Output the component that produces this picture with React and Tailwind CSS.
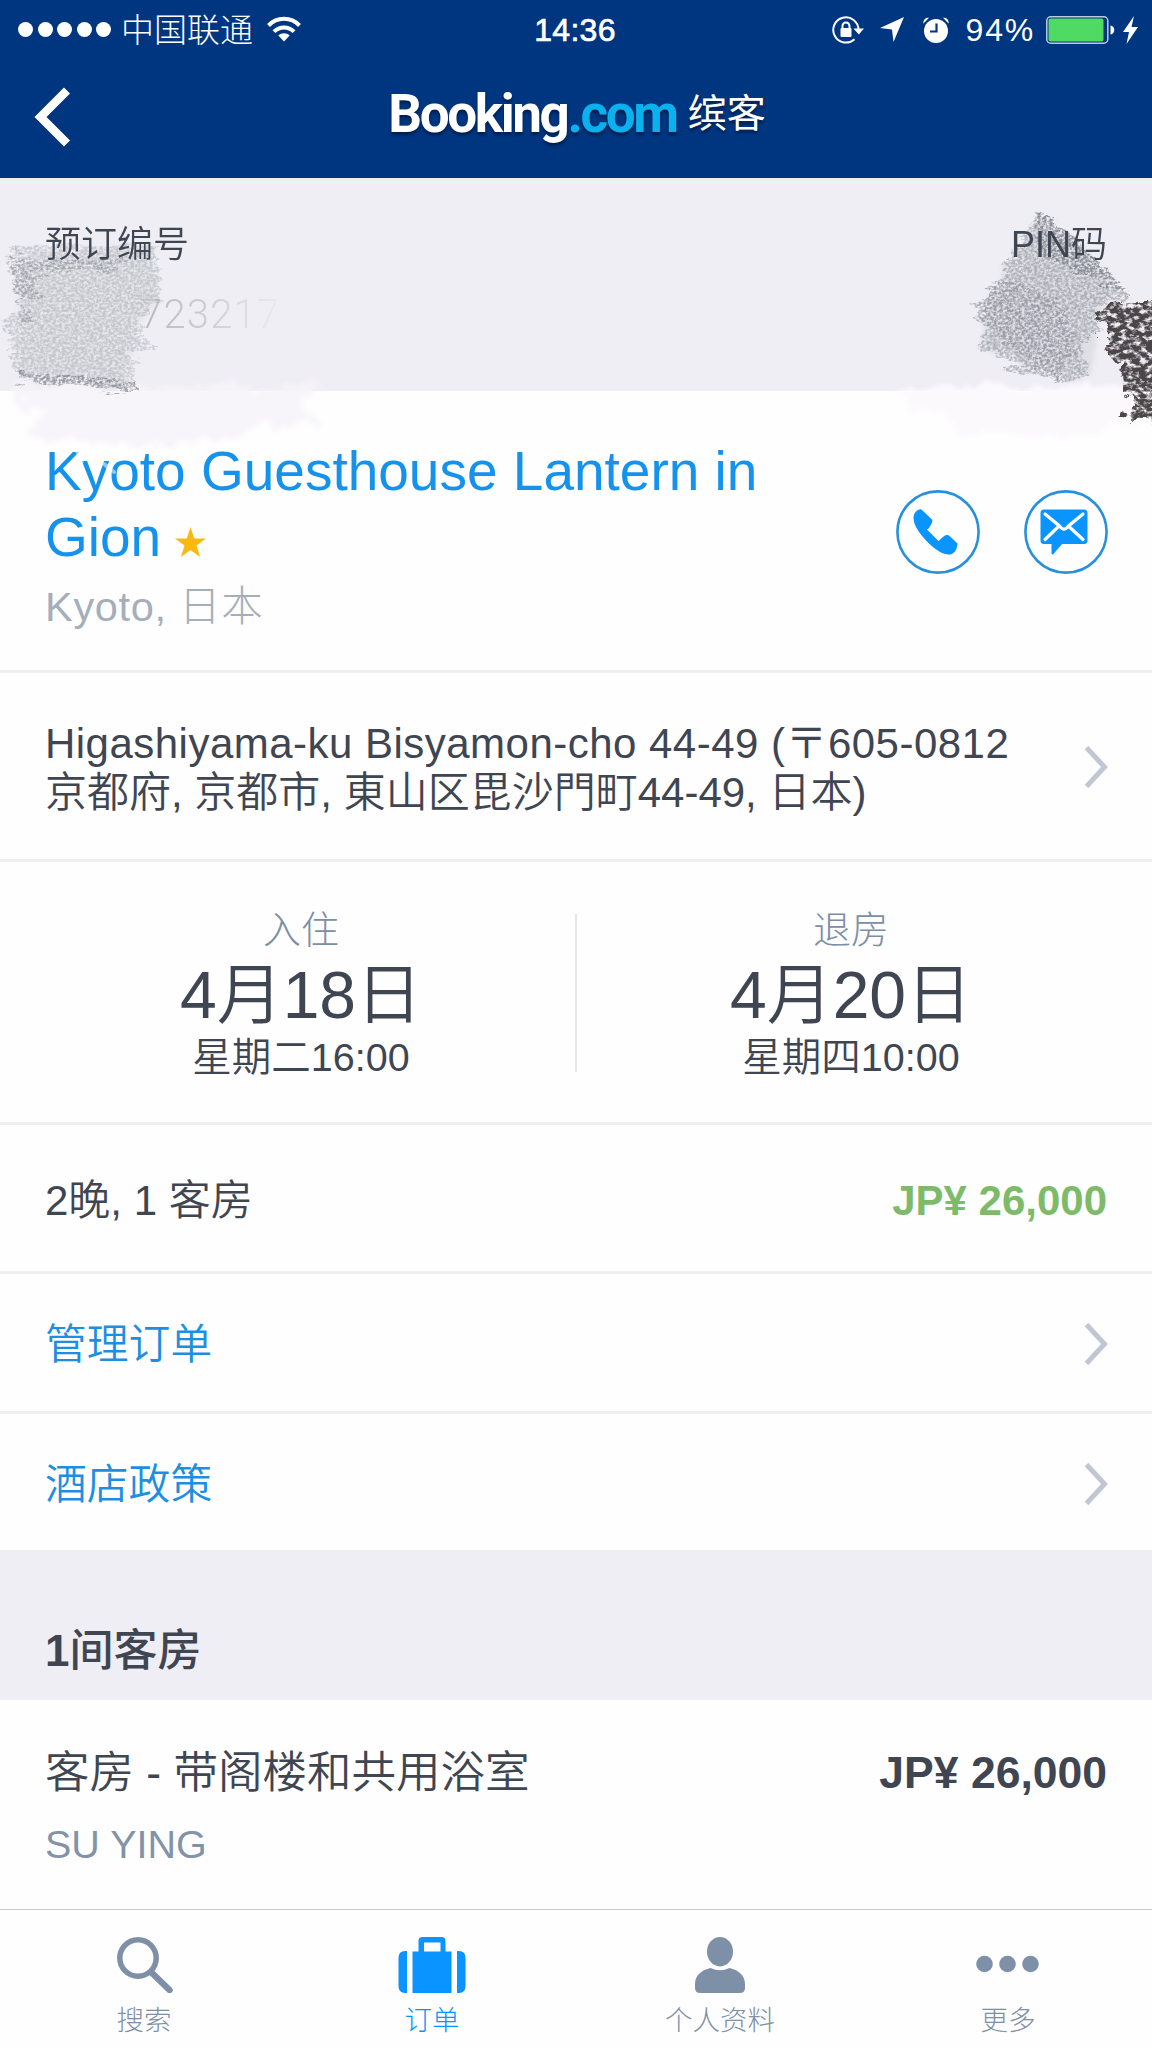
// src/App.jsx
import React from 'react';

const tabs = [
  { id: 'search', label: '搜索', Icon: SearchIcon },
  { id: 'bookings', label: '订单', Icon: SuitcaseIcon, active: true },
  { id: 'profile', label: '个人资料', Icon: PersonIcon },
  { id: 'more', label: '更多', Icon: MoreIcon },
];

const stay = [
  { label: '入住', date: '4月18日', time: '星期二16:00' },
  { label: '退房', date: '4月20日', time: '星期四10:00' },
];

export default function App() {
  return (
    <div className="relative flex h-[2048px] w-[1152px] flex-col overflow-hidden bg-[#fefefe] font-['Liberation_Sans','Noto_Sans_CJK_SC',sans-serif] font-[350] text-[#3f4652]">
      <header className="h-[178px] bg-[#003580] text-white">
        <StatusBar />
        <NavBar />
      </header>

      <section className="flex h-[213px] justify-between bg-[#f0eef5] px-[45px] pt-[47px]">
        <div>
          <div className="relative z-10 text-[36px] leading-[40px]">预订编号</div>
          <div className="mt-[26px] pl-[95px] font-['Roboto',sans-serif] text-[40px] leading-[48px] font-light tracking-[1.200px]">
            <span className="bg-linear-to-r from-[#b9b9bf] via-[#d0ced4] to-[#ece9ef] bg-clip-text text-transparent">723217</span>
          </div>
        </div>
        <div className="relative z-10 text-[36px] leading-[40px]">PIN码</div>
      </section>

      <section className="flex h-[282px] justify-between border-b-[3px] border-[#efeef2] pr-[44px] pl-[45px] pt-[47px]">
        <div>
          <h1 className="w-[740px] text-[55px] leading-[66px] text-[#1592ec]">
            Kyoto Guesthouse Lantern in Gion
            <svg viewBox="0 0 31 30" className="ml-[14px] inline-block h-[30px] w-[31px] align-[-1px]">
              <path d="M15.500 0L19.200 11.400H31L21.500 18.400L25.100 30L15.500 22.900L5.900 30L9.500 18.400L0 11.400H11.800Z" fill="#fbb90d" />
            </svg>
          </h1>
          <p className="mt-[13px] text-[41.5px] leading-[48px] font-light tracking-[0.700px] text-[#a5afbc]">Kyoto, 日本</p>
        </div>
        <div className="flex gap-[44px] pt-[52px]">
          <PhoneButton />
          <MessageButton />
        </div>
      </section>

      <section className="flex h-[189px] items-start justify-between border-b-[3px] border-[#efeef2] pr-[44px] pl-[45px] pt-[46px]">
        <p className="text-[42px] leading-[49px]">
          <span className="tracking-[0.480px]">Higashiyama-ku Bisyamon-cho 44-49 (〒605-0812</span>
          <br />
          京都府, 京都市, 東山区毘沙門町44-49, 日本)
        </p>
        <Chevron className="mt-[27px]" />
      </section>

      <section className="flex h-[263px] border-b-[3px] border-[#efeef2] px-[45px]">
        <StayDate {...stay[0]} />
        <div className="mx-[18px] mt-[52px] h-[158px] w-[2px] bg-[#e6e5ea]"></div>
        <StayDate {...stay[1]} />
      </section>

      <section className="flex h-[149px] items-center justify-between border-b-[3px] border-[#efeef2] px-[45px] pt-[5px] text-[42px]">
        <span>2晚, 1 客房</span>
        <span className="font-bold text-[#7dbb69]">JP¥ 26,000</span>
      </section>

      <LinkRow className="h-[140px] border-b-[3px] border-[#efeef2]">管理订单</LinkRow>
      <LinkRow className="h-[136px]">酒店政策</LinkRow>

      <section className="h-[150px] bg-[#f0eef5] px-[45px] pt-[76px]">
        <h2 className="text-[44px] leading-[50px] font-medium">
          <span className="font-bold">1</span>间客房
        </h2>
      </section>

      <section className="h-[209px] px-[45px] pt-[48px]">
        <div className="flex justify-between text-[44.5px] leading-[50px]">
          <span>客房 - 带阁楼和共用浴室</span>
          <span className="font-bold">JP¥ 26,000</span>
        </div>
        <p className="mt-[22px] text-[39.5px] leading-[48px] text-[#8292a8]">SU YING</p>
      </section>

      <nav className="grid h-[139px] grid-cols-4 border-t-[1.500px] border-[#c9c9cc] pt-[27px]">
        {tabs.map(({ id, label, Icon, active }) => (
          <div key={id} className={`flex flex-col items-center ${active ? 'text-[#0a94ff]' : 'text-[#7e90a8]'}`}>
            <Icon />
            <span className="mt-[12px] text-[27.5px] leading-[32px] font-light">{label}</span>
          </div>
        ))}
      </nav>

      <Scribbles />
    </div>
  );
}

function StatusBar() {
  return (
    <div className="grid h-[60px] grid-cols-[1fr_auto_1fr] items-center text-[32px] leading-[60px]">
      <div className="flex items-center pl-[18px]">
        <div className="flex gap-[4.500px] pb-[4px]">
          <i className="size-[15px] rounded-full bg-white"></i>
          <i className="size-[15px] rounded-full bg-white"></i>
          <i className="size-[15px] rounded-full bg-white"></i>
          <i className="size-[15px] rounded-full bg-white"></i>
          <i className="size-[15px] rounded-full bg-white"></i>
        </div>
        <span className="ml-[10px] pb-px text-[33px] font-light">中国联通</span>
        <svg viewBox="0 0 34 26" className="mb-[6px] ml-[14px] h-[26px] w-[34px]" fill="none" stroke="white" strokeWidth="4">
          <path d="M1.500 9.500C10 0.600 24 0.600 32.500 9.500" />
          <path d="M7 15.600C12.500 10 21.500 10 27 15.600" />
          <path d="M17 25.500L11.300 19.500C14.500 16.500 19.500 16.500 22.700 19.500Z" fill="white" stroke="none" />
        </svg>
      </div>
      <span className="pr-[2px] pb-[3px] tracking-[0.300px] [-webkit-text-stroke:0.7px_white]">14:36</span>
      <div className="flex items-center justify-end pr-[14px]">
        {/* orientation lock */}
        <svg viewBox="0 0 32 28" className="mb-[4px] h-[28px] w-[32px]" fill="none" stroke="white" strokeWidth="2">
          <path d="M26.500 14A12.600 12.600 0 1 0 22.500 23.200" />
          <path d="M21.500 12.500H32L26.800 18.500Z" fill="white" stroke="none" />
          <rect x="8.500" y="12" width="11" height="9" rx="1" fill="white" stroke="none" />
          <path d="M10.500 13V10a3.500 3.500 0 0 1 7 0V13" />
        </svg>
        {/* location */}
        <svg viewBox="0 0 24 25" className="mb-[4px] ml-[16px] h-[25px] w-[24px]" fill="white">
          <path d="M24 0L13.500 25L12 12.500L0 11Z" />
        </svg>
        {/* alarm */}
        <svg viewBox="0 0 26 26" className="mb-[4px] ml-[19px] h-[26px] w-[26px]">
          <circle cx="13" cy="14" r="12" fill="white" />
          <path d="M0.500 6.500C-0.200 2.500 3 0.300 6 0.800Z" fill="white" />
          <path d="M25.500 6.500C26.200 2.500 23 0.300 20 0.800Z" fill="white" />
          <path d="M13.500 6.500V14.500H7" fill="none" stroke="#003580" strokeWidth="2.200" />
        </svg>
        <span className="ml-[17px] pb-[3px] tracking-[1.800px]">94%</span>
        <svg viewBox="0 0 69 28" className="mb-[3px] ml-[11px] h-[28px] w-[69px]">
          <rect x="0.800" y="0.800" width="61" height="26.400" rx="4" fill="none" stroke="#b9cbe2" strokeWidth="1.500" />
          <rect x="2.500" y="2.500" width="55" height="23" rx="2" fill="#4fda64" />
          <path d="M64.500 9.500C69.500 10 69.500 18 64.500 18.500Z" fill="white" />
        </svg>
        <svg viewBox="0 0 15 28" className="mb-[4px] ml-[8px] h-[28px] w-[15px]" fill="white">
          <path d="M11 0L0 16H6L3.500 28L15 11H8.500Z" />
        </svg>
      </div>
    </div>
  );
}

function NavBar() {
  return (
    <div className="grid h-[118px] grid-cols-[1fr_auto_1fr] items-center">
      <svg viewBox="0 0 38 60" className="mb-[4px] ml-[33px] h-[60px] w-[38px]" fill="none" stroke="white" strokeWidth="8.500">
        <path d="M34 3.500L7.500 30L34 56.500" />
      </svg>
      <div className="flex items-center pb-[11px] pl-[2px] leading-[60px] [text-shadow:0_3px_3px_rgba(0,0,0,0.4)]">
        <span className="font-['Roboto',sans-serif] text-[53px] font-bold tracking-[-2.400px]">
          Booking<span className="text-[#0bb0ee]">.com</span>
        </span>
        <span className="ml-[11px] text-[39px] font-normal">缤客</span>
      </div>
    </div>
  );
}

function StayDate({ label, date, time }) {
  return (
    <div className="flex flex-1 flex-col items-center pt-[44px]">
      <span className="text-[38px] leading-[48px] font-light text-[#7c8ea6]">{label}</span>
      <span className="mt-[8px] text-[66px] leading-[66px]">{date}</span>
      <span className="mt-[6px] text-[39.5px] leading-[46px]">{time}</span>
    </div>
  );
}

function LinkRow({ className, children }) {
  return (
    <a className={`flex items-center justify-between pr-[44px] pl-[45px] pt-[3px] text-[41.800px] text-[#1e8fe0] ${className}`}>
      <span className="pt-[3px]">{children}</span>
      <Chevron />
    </a>
  );
}

function Chevron({ className = '' }) {
  return (
    <svg viewBox="0 0 24 42" className={`h-[42px] w-[24px] ${className}`} fill="none" stroke="#c0c6d2" strokeWidth="5">
      <path d="M2.500 1.600L20.500 21L2.500 40.400" />
    </svg>
  );
}

function PhoneButton() {
  return (
    <svg viewBox="0 0 84 84" className="size-[84px]">
      <circle cx="42" cy="42" r="40.600" fill="none" stroke="#2790dc" strokeWidth="2.600" />
      <path
        d="M20 21.500C22 20 23.500 19 25.500 19.500L36 29.500C37 31 36 33 33 38L31 39.500L42.500 51L47.500 46.500C50 44.500 52 44.500 53.500 46L61.500 53.500C61.500 57 60 62 56 64C50 66 42 62 33 53.500C25 45.500 17.500 36 17.500 28C17.500 25 18.500 23 20 21.500Z"
        fill="#0a94ff"
      />
    </svg>
  );
}

function MessageButton() {
  return (
    <svg viewBox="0 0 84 84" className="size-[84px]">
      <circle cx="42" cy="42" r="40.600" fill="none" stroke="#2790dc" strokeWidth="2.600" />
      <path d="M20 19.500H60Q63.500 19.500 63.500 23V50.500Q63.500 54 60 54H38L29 64.500L27.500 64V54H20Q16.500 54 16.500 50.500V23Q16.500 19.500 20 19.500Z" fill="#0a94ff" />
      <path d="M21 24L35.500 36C39 40.300 41 40.300 44.500 36L59 24M21 49.500L33.500 37.500M59 49.500L46 37.500" fill="none" stroke="white" strokeWidth="3.200" strokeLinecap="round" />
    </svg>
  );
}

function SearchIcon() {
  return (
    <svg viewBox="0 0 56 56" className="ml-[2px] size-[56px]" fill="none" stroke="currentColor">
      <circle cx="21" cy="21" r="18.200" strokeWidth="5.500" />
      <path d="M35 36L52.500 53" strokeWidth="6.500" strokeLinecap="round" />
    </svg>
  );
}

function SuitcaseIcon() {
  return (
    <svg viewBox="0 0 68 56" className="h-[56px] w-[68px]" fill="currentColor">
      <path d="M9 14V56H7Q0.500 56 0.500 49V21Q0.500 14 7 14Z" />
      <path d="M59 14V56H61Q67.500 56 67.500 49V21Q67.500 14 61 14Z" />
      <path d="M14.500 14.500H20.500V4Q20.500 0 24.500 0H43.500Q47.500 0 47.500 4V14.500H53.500V56H14.500ZM26 5.500V14.500H42.500V5.500Z" fillRule="evenodd" />
    </svg>
  );
}

function PersonIcon() {
  return (
    <svg viewBox="0 0 52 56" className="h-[56px] w-[52px]" fill="currentColor">
      <ellipse cx="26" cy="14.700" rx="13" ry="14.700" />
      <path d="M1 47C1 38 8 33 16.500 31Q26 35.500 35.500 31C44 33 51 38 51 47V51Q51 56 46 56H6Q1 56 1 51Z" />
    </svg>
  );
}

function MoreIcon() {
  return (
    <svg viewBox="0 0 64 56" className="h-[56px] w-[64px]" fill="currentColor">
      <circle cx="8.500" cy="27" r="8.300" />
      <circle cx="31.500" cy="27" r="8.300" />
      <circle cx="54.500" cy="27" r="8.300" />
    </svg>
  );
}

// Pencil strokes that hide the booking number and the PIN
function Scribbles() {
  return (
    <svg viewBox="0 180 1152 300" className="pointer-events-none absolute top-[180px] left-0 h-[300px] w-[1152px]">
      <defs>
        <filter id="pencil" x="-10%" y="-10%" width="120%" height="120%" colorInterpolationFilters="sRGB">
          <feTurbulence type="fractalNoise" baseFrequency="0.32 0.4" numOctaves="3" seed="4" result="grain" />
          <feColorMatrix in="grain" values="0 0 0 0 0  0 0 0 0 0  0 0 0 0 0  3 0 0 0 -0.95" result="mask" />
          <feTurbulence type="fractalNoise" baseFrequency="0.03 0.12" numOctaves="4" seed="9" result="wave" />
          <feDisplacementMap in="SourceGraphic" in2="wave" scale="26" xChannelSelector="R" yChannelSelector="G" result="rough" />
          <feComposite in="rough" in2="mask" operator="in" />
          <feGaussianBlur stdDeviation="0.5" />
        </filter>
        <filter id="charcoal" x="-10%" y="-10%" width="120%" height="120%" colorInterpolationFilters="sRGB">
          <feTurbulence type="fractalNoise" baseFrequency="0.15 0.22" numOctaves="4" seed="7" result="grain" />
          <feColorMatrix in="grain" values="0 0 0 0 0  0 0 0 0 0  0 0 0 0 0  4 0 0 0 -1.2" result="mask" />
          <feTurbulence type="fractalNoise" baseFrequency="0.08" numOctaves="4" seed="9" result="wave" />
          <feDisplacementMap in="SourceGraphic" in2="wave" scale="22" xChannelSelector="R" yChannelSelector="G" result="rough" />
          <feComposite in="rough" in2="mask" operator="in" />
          <feGaussianBlur stdDeviation="0.5" />
        </filter>
        <filter id="smudge" x="-10%" y="-10%" width="120%" height="120%" colorInterpolationFilters="sRGB">
          <feTurbulence type="fractalNoise" baseFrequency="0.05" numOctaves="4" seed="2" result="wave" />
          <feDisplacementMap in="SourceGraphic" in2="wave" scale="24" xChannelSelector="R" yChannelSelector="G" />
          <feGaussianBlur stdDeviation="2" />
        </filter>
      </defs>

      <g filter="url(#smudge)">
        <path d="M12 384H325L300 402L322 425L262 425L240 438L120 445L20 436L40 415L16 400Z" fill="#f6f3f8" opacity="0.85" />
        <path d="M900 386H1120L1140 420L1060 440L1015 430L960 436L940 410L905 412Z" fill="#fbf9fc" />
        <path d="M34 250H150L158 300L136 330L128 382L20 376L18 330L20 262Z" fill="#d9dbe0" opacity="0.5" />
        <path d="M1040 226L1075 244L1118 294L1098 320L1094 380L1056 378L982 346L994 288L1018 260Z" fill="#d3d5dc" opacity="0.6" />
      </g>

      <g filter="url(#pencil)">
        <path d="M12 257L34 246L152 247L158 275L160 300L138 328L158 350L130 355L138 388L16 378L18 355L6 345L6 320L18 310L16 290Z" fill="#a4a8af" opacity="0.5" />
        <path d="M8 256L24 256L40 264L125 258L118 268L32 272L40 296L14 300L34 318L20 322L18 300Z" fill="#80848d" opacity="0.45" />
        <path d="M14 370L60 376L138 382L136 390L60 386L14 380Z" fill="#6f737c" opacity="0.6" />
      </g>
      <g filter="url(#pencil)">
        <path d="M1035 215L1047 213L1075 240L1127 298L1092 304L1098 330L1080 350L1090 372L1055 384L975 346L988 330L970 303L992 286L1014 256Z" fill="#8d919a" opacity="0.6" />
        <path d="M1036 216L1048 213L1078 240L1128 298L1088 274L1040 252Z" fill="#6d717a" opacity="0.6" />
        <path d="M972 300L1000 280L1060 300L1075 340L1056 384L1000 338Z" fill="#777b84" opacity="0.35" />
      </g>
      <g filter="url(#charcoal)">
        <path d="M1092 312L1114 305L1170 300V422L1118 420L1132 404L1117 384L1124 362L1104 350L1102 338L1104 326Z" fill="#4a4648" />
      </g>

      {/* eraser marks over the hotel name */}
      <g stroke="white" strokeLinecap="round" fill="none" opacity="0.5">
        <path d="M74 446L82 462" strokeWidth="3" />
        <path d="M104 464L114 472" strokeWidth="4" />
      </g>
    </svg>
  );
}
